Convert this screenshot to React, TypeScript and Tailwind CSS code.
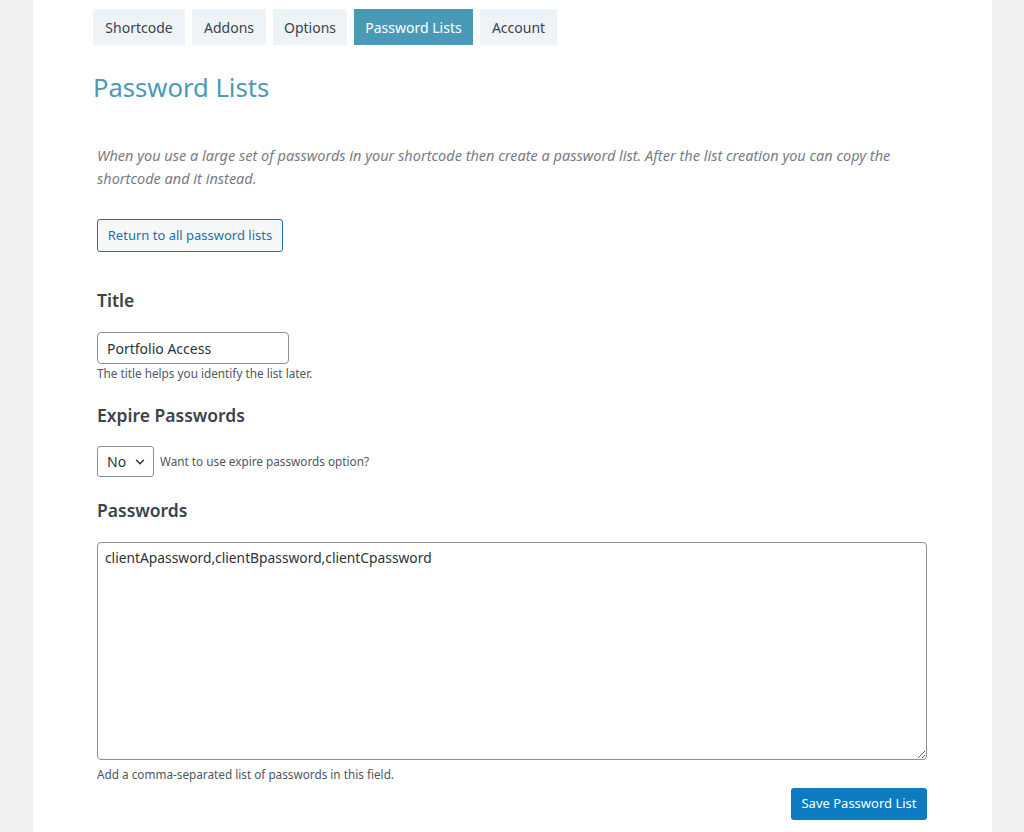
import { ChevronDown } from "lucide-react";

const tabs = [
  { label: "Shortcode", w: "w-[92px]" },
  { label: "Addons", w: "w-[74px]" },
  { label: "Options", w: "w-[74px]" },
  { label: "Password Lists", w: "w-[119px]", active: true },
  { label: "Account", w: "w-[77px]" },
];

export default function App() {
  return (
    <div
      className="min-h-[832px] bg-[#f0f0f1] flex text-[#3c434a]"
      style={{ fontFamily: '"Noto Sans", "Open Sans", sans-serif' }}
    >
      <main className="ml-[33px] w-[959px] min-h-[832px] bg-white pl-[60px] pr-[64px]">
        <nav className="pt-[9px] flex gap-[7px]">
          {tabs.map((t) => (
            <button
              key={t.label}
              className={`${t.w} h-[36px] flex items-center justify-center text-[14px] ${
                t.active
                  ? "bg-[#4a9ab7] text-white"
                  : "bg-[#eef3f7] text-[#3c434a]"
              }`}
            >
              {t.label}
            </button>
          ))}
        </nav>

        <h1 className="mt-[25px] text-[25.6px] leading-[36px] text-[#4a9ab8]">
          Password Lists
        </h1>

        <section className="ml-[4px]">
          <p className="mt-[38px] text-[14.5px] leading-[23px] italic text-[#787c82]">
            When you use a large set of passwords in your shortcode then create
            a password list. After the list creation you can copy the
            <br />
            shortcode and it instead.
          </p>

          <button className="mt-[29px] h-[33px] w-[186px] rounded-[3px] border border-[#2271b1] bg-[#f6f7f7] text-[13px] text-[#2271b1]">
            Return to all password lists
          </button>

          <h2 className="mt-[36px] text-[17.5px] leading-[24px] font-semibold">
            Title
          </h2>
          <input
            defaultValue="Portfolio Access"
            className="mt-[20px] block h-[32px] w-[192px] rounded-[4px] border border-[#8c8f94] px-[9px] text-[14px] text-[#2c3338] outline-none"
          />
          <p className="mt-[1px] text-[11.75px] leading-[16px] text-[#50575e]">
            The title helps you identify the list later.
          </p>

          <h2 className="mt-[22px] text-[17.5px] leading-[24px] font-semibold">
            Expire Passwords
          </h2>
          <div className="mt-[19px] flex items-center gap-[6px]">
            <div className="h-[31px] w-[57px] rounded-[3px] border border-[#8c8f94] flex items-center pl-[9px] pr-[6px] justify-between">
              <span className="text-[14px] text-[#2c3338]">No</span>
              <ChevronDown className="h-[14px] w-[14px] text-[#2c3338]" strokeWidth={2.5} />
            </div>
            <span className="text-[11.75px] text-[#50575e]">
              Want to use expire passwords option?
            </span>
          </div>

          <h2 className="mt-[21px] text-[17.5px] leading-[24px] font-semibold">
            Passwords
          </h2>
          <textarea
            defaultValue="clientApassword,clientBpassword,clientCpassword"
            className="mt-[20px] block h-[218px] w-[830px] rounded-[4px] border border-[#8c8f94] px-[7px] py-[5px] text-[13.8px] leading-[20px] text-[#2c3338] outline-none"
          />
          <p className="mt-[6px] text-[11.75px] leading-[16px] text-[#50575e]">
            Add a comma-separated list of passwords in this field.
          </p>

          <div className="mt-[6px] flex justify-end w-[830px]">
            <button className="h-[32px] w-[136px] rounded-[3px] bg-[#0c7bbf] text-[13px] text-white">
              Save Password List
            </button>
          </div>
        </section>
      </main>
    </div>
  );
}
